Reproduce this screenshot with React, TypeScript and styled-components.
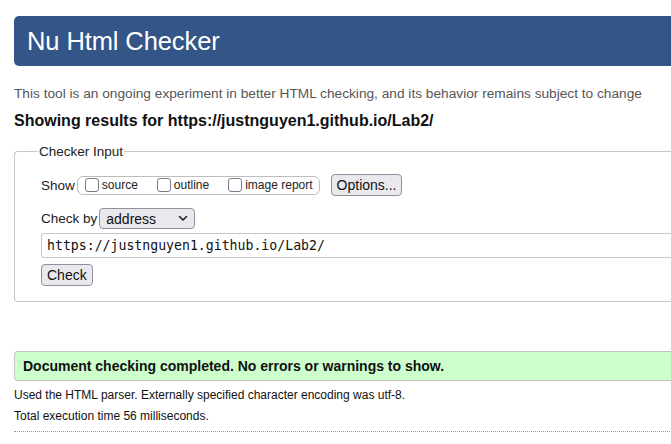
import styled, { createGlobalStyle } from "styled-components"

const GlobalStyle = createGlobalStyle`
    html, body {
        margin: 0;
        padding: 0;
        background: #ffffff;
        overflow: hidden;
    }
    body {
        font-family: "Liberation Sans", Arial, sans-serif;
        color: #111;
    }
`

const options = ["source", "outline", "image report"]

export default function App() {
    return (
        <>
            <GlobalStyle />
            <Page>
                <Header>
                    <Title>Nu Html Checker</Title>
                </Header>
                <Intro>This tool is an ongoing experiment in better HTML checking, and its behavior remains subject to change</Intro>
                <Results>Showing results for https://justnguyen1.github.io/Lab2/</Results>

                <Fieldset>
                    <Legend>Checker Input</Legend>
                    <Row $mt={15}>
                        <Label>Show</Label>
                        <Pill>
                            {options.map((opt) => (
                                <Option key={opt}>
                                    <Box />
                                    {opt}
                                </Option>
                            ))}
                        </Pill>
                        <Button $ml={11}>Options...</Button>
                    </Row>
                    <Row $mt={12}>
                        <Label>Check by</Label>
                        <Select>
                            address
                            <svg width="10" height="7" viewBox="0 0 10 7">
                                <path d="M1.5 1.5 L5 5 L8.5 1.5" fill="none" stroke="#222" strokeWidth="1.6" strokeLinecap="round" strokeLinejoin="round" />
                            </svg>
                        </Select>
                    </Row>
                    <UrlInput>https://justnguyen1.github.io/Lab2/</UrlInput>
                    <Button>Check</Button>
                </Fieldset>

                <Success>Document checking completed. No errors or warnings to show.</Success>
                <Note>Used the HTML parser. Externally specified character encoding was utf-8.</Note>
                <Note $mt={7}>Total execution time 56 milliseconds.</Note>
                <Rule />
            </Page>
        </>
    )
}

const Page = styled.div`
    width: 740px;
    padding: 16px 0 0 14px;
`

const Header = styled.div`
    background-color: #335588;
    height: 50px;
    border-radius: 5px 0 0 5px;
    display: flex;
    align-items: center;
    padding-left: 13px;
`

const Title = styled.h1`
    margin: 0;
    color: #ffffff;
    font-size: 25.5px;
    font-weight: 400;
    letter-spacing: -0.1px;
`

const Intro = styled.p`
    margin: 20px 0 0 0;
    font-size: 13.7px;
    color: #555;
    line-height: 15px;
`

const Results = styled.h2`
    margin: 10px 0 0 0;
    font-size: 16px;
    font-weight: 700;
    color: #111;
    line-height: 19px;
`

const Fieldset = styled.fieldset`
    margin: 14px 0 0 0;
    border: 1px solid #c8c8c8;
    border-radius: 4px 0 0 4px;
    border-right: none;
    padding: 0 0 15px 26px;
`

const Legend = styled.legend`
    font-size: 13.5px;
    padding: 0 1px;
    margin-left: -3px;
    color: #222;
`

const Row = styled.div<{ $mt?: number }>`
    display: flex;
    align-items: center;
    margin-top: ${(p) => p.$mt ?? 6}px;
`

const Label = styled.span`
    font-size: 13.5px;
    color: #222;
    margin-right: 2px;
`

const Pill = styled.div`
    display: flex;
    align-items: center;
    gap: 19px;
    height: 17px;
    padding: 0 6px 0 7px;
    border: 1px solid #bdbdbd;
    border-radius: 6px;
`

const Option = styled.label`
    display: flex;
    align-items: center;
    font-size: 12px;
    color: #222;
    gap: 3px;
`

const Box = styled.span`
    box-sizing: border-box;
    width: 14px;
    height: 14px;
    border: 1.5px solid #7b7b8a;
    border-radius: 3px;
    background: #fff;
`

const Button = styled.button<{ $ml?: number }>`
    font-family: "Liberation Sans", Arial, sans-serif;
    font-size: 14px;
    color: #111;
    background: #e9e9ed;
    border: 1px solid #8f8f9d;
    border-radius: 4px;
    padding: 0 5px;
    height: 22px;
    margin-left: ${(p) => p.$ml ?? 0}px;
    align-self: flex-start;
`

const Select = styled.div`
    display: flex;
    align-items: center;
    justify-content: space-between;
    width: 82px;
    height: 19px;
    padding: 0 6px 0 6px;
    font-size: 14px;
    color: #111;
    background: #e9e9ed;
    border: 1px solid #8f8f9d;
    border-radius: 4px;
`

const UrlInput = styled.div`
    margin-top: 4px;
    height: 23px;
    display: flex;
    align-items: center;
    padding-left: 5px;
    font-family: "DejaVu Sans Mono", "Liberation Mono", monospace;
    font-size: 13.2px;
    color: #111;
    border: 1px solid #c8c8c8;
    border-right: none;
    border-radius: 3px 0 0 3px;
    margin-bottom: 6px;
`

const Success = styled.div`
    margin-top: 49px;
    height: 28px;
    display: flex;
    align-items: center;
    padding-left: 8px;
    background: #ccffcc;
    border: 1px solid #c4c4c4;
    border-right: none;
    border-radius: 4px 0 0 4px;
    font-size: 14px;
    font-weight: 700;
    color: #111;
`

const Note = styled.p<{ $mt?: number }>`
    margin: ${(p) => p.$mt ?? 7}px 0 0 0;
    font-size: 12px;
    line-height: 14px;
    color: #111;
`

const Rule = styled.div`
    margin-top: 8px;
    border-top: 1px dotted #999;
`
